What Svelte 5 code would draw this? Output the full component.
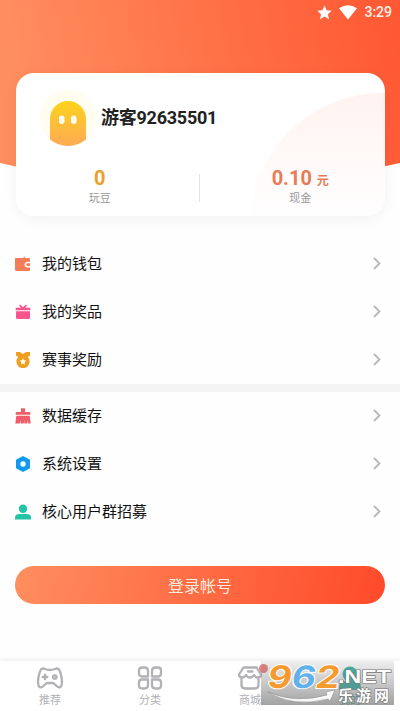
<script lang="ts">
  const groups = [
    [
      { icon: 'wallet', label: '我的钱包' },
      { icon: 'gift', label: '我的奖品' },
      { icon: 'medal', label: '赛事奖励' },
    ],
    [
      { icon: 'brush', label: '数据缓存' },
      { icon: 'settings', label: '系统设置' },
      { icon: 'user', label: '核心用户群招募' },
    ],
  ];

  const tabs = [
    { icon: 'game', label: '推荐' },
    { icon: 'grid', label: '分类' },
    { icon: 'shop', label: '商城', dot: true },
    { icon: 'me', label: '我的', active: true },
  ];
</script>

<div class="page">
  <header class="hero">
    <svg class="hero-bg" width="400" height="190" viewBox="0 0 400 190">
      <defs>
        <linearGradient id="hero" x1="0" y1="0.1" x2="1" y2="0">
          <stop offset="0" stop-color="#ff8e5e" />
          <stop offset="1" stop-color="#ff5733" />
        </linearGradient>
      </defs>
      <path d="M0 0H400V163Q200 210 0 163Z" fill="url(#hero)" />
    </svg>

    <div class="status">
      <svg width="15" height="15" viewBox="0 0 15 15"><path d="M7.5.4l2.1 4.8 5.1.5-3.8 3.5 1.1 5.1-4.5-2.7L3 14.3l1.1-5.1L.3 5.7l5.1-.5z" fill="#fff" /></svg>
      <svg width="18" height="15" viewBox="0 0 18 15"><path d="M0 3.2Q9-2.6 18 3.2L9 14.6z" fill="#fff" /></svg>
      <span class="clock">3:29</span>
    </div>

    <section class="card">
      <svg class="card-arc" width="135" height="123" viewBox="0 0 135 123">
        <defs>
          <linearGradient id="arc" x1="0" y1="0" x2="0" y2="1">
            <stop offset="0" stop-color="#fff3f0" />
            <stop offset="0.650" stop-color="#fffbfa" />
            <stop offset="1" stop-color="#fffefe" />
          </linearGradient>
        </defs>
        <path d="M135 0A134 132 0 0 0 0 123H135Z" fill="url(#arc)" />
      </svg>
      <div class="profile">
        <svg width="56" height="56" viewBox="0 0 56 56">
          <defs>
            <linearGradient id="ghost" x1="0" y1="0" x2="0" y2="1">
              <stop offset="0" stop-color="#fdd31b" />
              <stop offset="1" stop-color="#ffaa55" />
            </linearGradient>
          </defs>
          <circle cx="28" cy="28" r="28" fill="#fffdf0" />
          <path d="M10 29a18 18 0 0 1 36 0V49.500Q38 56 28 56T10 49.500Z" fill="url(#ghost)" />
          <rect x="19" y="25.500" width="5.500" height="8.500" rx="2.700" fill="#fffdf0" />
          <rect x="31" y="25.500" width="5.500" height="8.500" rx="2.700" fill="#fffdf0" />
        </svg>
        <h1 class="name">游客92635501</h1>
      </div>
      <div class="stats">
        <div class="stat">
          <div class="value gold">0</div>
          <div class="caption">玩豆</div>
        </div>
        <div class="divider"></div>
        <div class="stat">
          <div class="value coral">0.10 <small>元</small></div>
          <div class="caption">现金</div>
        </div>
      </div>
    </section>
  </header>

  <main>
    {#each groups as items}
      <ul class="menu">
        {#each items as item}
          <li class="row">
            <svg class="row-icon" width="16" height="16" viewBox="0 0 16 16">
              {#if item.icon === 'wallet'}
                <path d="M1 2h13q1 0 1 1v2.700h-2.500a2.900 2.900 0 0 0 0 5.800H15V14q0 1-1 1H1.500Q0 15 0 13.500V2.500Q0 2 1 2z" fill="#f57c58" />
                <path d="M8 1.700L10 .6v1.200z" fill="#e76c50" />
                <path d="M15 7.300h-2.500a1.300 1.300 0 0 0 0 2.600H15z" fill="#f57c58" />
              {:else if item.icon === 'gift'}
                <path d="M.7 3.800H6L4 1.500l1-.9 3 2.300L11 .6l1 .9-2 2.300h5.300v2.400H.7zM1 7.300h14v6.200q0 1.500-1.500 1.500h-11Q1 15 1 13.500z" fill="#f9568e" />
              {:else if item.icon === 'medal'}
                <path d="M1 0h4l3 2 3-2h4v3.500l-2.500 1.700h-9L1 3.500z" fill="#ef9e1d" />
                <circle cx="8" cy="9.500" r="6.600" fill="#ef9e1d" />
                <path d="M8 6.200l1 2.100 2.300.3-1.700 1.600.4 2.300-2-1.100-2 1.100.4-2.300-1.700-1.600L7 8.300z" fill="#fff" />
              {:else if item.icon === 'brush'}
                <path d="M6 .3h4V4h4.500q.8 0 .8.800v2H.7v-2q0-.8.800-.8H6zM1.300 7.700h13.400l1 7.700h-2.500l-.6-3.400-.4 3.400H9.300V12l-.6 3.400H5.500l.2-3.400-1 3.400H.3z" fill="#f05d68" />
              {:else if item.icon === 'settings'}
                <path d="M8 0l7 3.800v8.400L8 16l-7-3.800V3.800z" fill="#0f9bf2" />
                <circle cx="8" cy="8" r="2.700" fill="#fff" />
              {:else}
                <circle cx="8" cy="4.800" r="4.200" fill="#23c3a5" />
                <path d="M0 15.500v-1.800Q0 10 4.500 10h7q4.500 0 4.500 3.700v1.800z" fill="#23c3a5" />
              {/if}
            </svg>
            <span class="row-label">{item.label}</span>
            <svg class="chevron" width="8" height="13" viewBox="0 0 8 13"><path d="M1 1l5.500 5.500L1 12" fill="none" stroke="#b8b8b8" stroke-width="1.900" /></svg>
          </li>
        {/each}
      </ul>
    {/each}
    <button class="login">登录帐号</button>
  </main>

  <nav class="tabs">
    {#each tabs as tab}
      <div class="tab" class:active={tab.active}>
        <div class="tab-icon">
          <svg width="28" height="24" viewBox="0 0 28 24" fill="none" stroke="#b1b1b6" stroke-width="2.300" stroke-linejoin="round" stroke-linecap="round">
            {#if tab.icon === 'game'}
              <path d="M5.500 3Q7 2 9 3q5 2 10 0 2-1 3.500 0Q24 4 25.500 11c.8 5 1.200 9-1.500 10.300-2 .7-3.200-.8-5-2.800-1-1-1.500-1.500-2.500-1.500h-5c-1 0-1.500.5-2.500 1.500-1.800 2-3 3.500-5 2.800C1.300 20 1.700 16 2.500 11 4 4 4.500 4 5.500 3z" />
              <path d="M6.700 11h4.600M9 8.700v4.600" />
              <circle cx="18.800" cy="11" r="1.700" />
            {:else if tab.icon === 'grid'}
              <path d="M6 1.500h2.500q3.500 0 3.500 3.500v5.500H6Q3 10.500 3 7.500v-3q0-3 3-3zM19.500 1.500H22q3 0 3 3v3q0 3-3 3h-6V5q0-3.500 3.500-3.500zM6 13.500h6V19q0 3.500-3.500 3.500H6q-3 0-3-3v-3q0-3 3-3zM16 13.500h6q3 0 3 3v3q0 3-3 3h-2.500Q16 22.500 16 19z" />
            {:else if tab.icon === 'shop'}
              <path d="M7.500 1.500h13L25 8.500q0 3-3 3-2.700 0-4-2.500-1.300 2.500-4 2.500T10 9q-1.300 2.500-4 2.500-3 0-3-3zM5.500 12v7q0 3.500 3.500 3.500h10q3.500 0 3.500-3.500v-7M12 5.500h4.500" />
            {:else}
              <circle cx="14" cy="8" r="7.500" fill="#35b8ac" stroke="none" />
              <path d="M3 24v-3q0-6 7-6h8q7 0 7 6v3z" fill="#35b8ac" stroke="none" />
            {/if}
          </svg>
          {#if tab.dot}<i class="dot"></i>{/if}
        </div>
        <span>{tab.label}</span>
      </div>
    {/each}
  </nav>

  <svg class="stamp" width="133" height="44" viewBox="0 0 133 44">
    <defs>
      <linearGradient id="stamp" x1="0" y1="0" x2="0" y2="1">
        <stop offset="0" stop-color="#777" stop-opacity="0.120" />
        <stop offset="1" stop-color="#777" stop-opacity="0.680" />
      </linearGradient>
    </defs>
    <rect width="133" height="44" fill="url(#stamp)" />
    <g class="digits" transform="translate(5 0) skewX(-10)">
      <text x="5" y="27" textLength="24" lengthAdjust="spacingAndGlyphs" fill="#f59a2e">9</text>
      <text x="29" y="27" textLength="24" lengthAdjust="spacingAndGlyphs" fill="#62b2ea">6</text>
      <text x="53" y="27" textLength="24" lengthAdjust="spacingAndGlyphs" fill="#f59a2e">2</text>
    </g>
    <path d="M7 31Q34 43 66 34l-1-3 9-2-5 11-2-2Q32 47 7 31z" fill="#f8f8f8" stroke="#888" stroke-width="0.500" />
    <text class="net" x="77" y="22" textLength="53" lengthAdjust="spacingAndGlyphs">.NET</text>
    <text class="site" x="77" y="39.500" textLength="51">乐游网</text>
  </svg>
</div>

<style>
  :global(body) { margin: 0; background: #fff; }
  .page {
    position: relative;
    display: flex; flex-direction: column;
    height: 711px; overflow: hidden;
    background: #fefefe;
    font-family: Roboto, 'Noto Sans CJK SC', sans-serif;
    color: #111;
  }
  .hero { position: relative; height: 240px; }
  .hero-bg { position: absolute; top: 0; left: 0; }
  .status {
    position: relative;
    display: flex; align-items: center; justify-content: flex-end; gap: 7px;
    height: 24px; padding-right: 8px;
    box-sizing: border-box;
  }
  .clock { font-size: 14px; font-weight: 500; color: #fff1e8; }
  .card {
    position: relative;
    height: 143px; margin: 49px 15.500px 0;
    background: #fff; border-radius: 18px;
    box-shadow: 0 3px 14px rgba(0, 0, 0, 0.05);
    overflow: hidden;
  }
  .card-arc { position: absolute; right: 0; bottom: 0; }
  .profile {
    position: relative;
    display: flex; align-items: center; gap: 5px;
    padding: 17px 0 0 24.500px;
  }
  .name {
    margin: 0; padding-bottom: 1px;
    font-size: 18px; line-height: 24px; font-weight: 700; letter-spacing: -0.25px;
    color: #222;
  }
  .stats { position: relative; display: flex; padding-top: 21px; }
  .stat { flex: 1; text-align: center; }
  .stat:first-child { padding-right: 16px; }
  .stat:last-child { padding-left: 15px; }
  .value { height: 23px; line-height: 23px; font-size: 20px; font-weight: 700; white-space: nowrap; }
  .value small { font-size: 12px; }
  .gold { color: #eaa02c; }
  .coral { color: #e77c55; }
  .caption { font-size: 11px; line-height: 18px; color: #999; }
  .divider { width: 1px; height: 28px; margin: 7px 1px 0 -1px; background: #e3e3e3; }
  .menu { list-style: none; margin: 0; padding: 0; }
  .menu + .menu { border-top: 8px solid #f4f4f4; }
  .row {
    display: flex; align-items: center;
    height: 48px; padding: 0 19px 0 15px;
  }
  .row-label { flex: 1; margin-left: 11px; font-size: 15px; line-height: 22px; }
  .chevron { margin-bottom: 1px; }
  .login {
    display: block; width: 370px; height: 38px;
    margin: 30px 15px 0; padding: 0;
    border: none; border-radius: 19px;
    background: linear-gradient(100deg, #ff8e5e, #ff4a2b);
    color: #ffeade; font-family: inherit; font-size: 16px;
  }
  .tabs {
    display: flex; margin-top: auto;
    height: 50px; background: #fff;
    box-shadow: 0 -1px 5px rgba(0, 0, 0, 0.08);
  }
  .tab {
    flex: 1;
    display: flex; flex-direction: column; align-items: center;
    padding-top: 5px;
    font-size: 11px; line-height: 16px; color: #b1b1b6;
  }
  .tab.active { color: #35b8ac; }
  .tab-icon { position: relative; height: 27px; }
  .dot {
    position: absolute; left: 23px; top: -2px;
    width: 9px; height: 9px; border-radius: 50%;
    background: #e98280;
  }
  .stamp { position: absolute; left: 261px; top: 661px; overflow: visible; }
  .digits text {
    font-family: Inter, sans-serif; font-size: 31px; font-weight: 700;
    stroke: #fff; stroke-width: 2px; paint-order: stroke;
  }
  .net, .site {
    fill: #fff; stroke: #777; stroke-width: 1.200px; paint-order: stroke;
    font-weight: 700;
  }
  .net { font-family: 'Liberation Sans', sans-serif; font-size: 18px; }
  .site { font-size: 15px; }
</style>
